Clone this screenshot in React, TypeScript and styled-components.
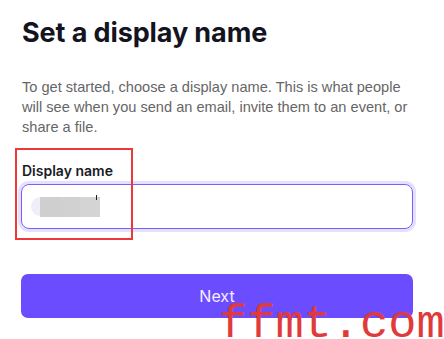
import React from "react";
import styled, { createGlobalStyle } from "styled-components";

const Global = createGlobalStyle`
  html, body { margin: 0; padding: 0; background: #ffffff; }
  body { font-family: Inter, "Noto Sans", sans-serif; }
`;

const Page = styled.div`
  position: relative;
  width: 444px;
  height: 339px;
  overflow: hidden;
  box-sizing: border-box;
  padding: 16px 31px 0 21px;
  display: flex;
  flex-direction: column;
`;

const Title = styled.h1`
  margin: 0 0 0 1px;
  font-family: Inter, sans-serif;
  font-weight: 700;
  font-size: 27px;
  line-height: 34px;
  color: #14141f;
  letter-spacing: -0.1px;
`;

const Lead = styled.p`
  margin: 27px 0 0 1px;
  font-family: "Liberation Sans", Arial, sans-serif;
  font-size: 14.6px;
  line-height: 20px;
  color: #666666;
`;

const Field = styled.div`
  margin-top: 25px;
  display: flex;
  flex-direction: column;
  gap: 4px;
`;

const Label = styled.label`
  margin-left: 1px;
  font-family: Inter, sans-serif;
  font-weight: 600;
  font-size: 14px;
  line-height: 18px;
  color: #1b1b26;
`;

const InputBox = styled.div`
  height: 43px;
  border: 1px solid #7a5cff;
  border-radius: 8px;
  box-shadow: 0 0 0 3px #e6e0ff;
  display: flex;
  align-items: center;
  padding-left: 9px;
`;

const Redacted = styled.div`
  display: flex;
  align-items: center;
  position: relative;
`;

const Cap = styled.span`
  width: 9px;
  height: 19px;
  border-radius: 10px 0 0 10px;
  background: #f0eefa;
`;

const Block = styled.span<{ $w: number; $c: string }>`
  width: ${(p) => p.$w}px;
  height: 20px;
  background: ${(p) => p.$c};
`;

const Caret = styled.span`
  position: absolute;
  left: 65px;
  top: -2px;
  width: 1px;
  height: 5px;
  background: #222;
`;

const Highlight = styled.div`
  position: absolute;
  left: 15px;
  top: 148px;
  width: 118px;
  height: 92px;
  box-sizing: border-box;
  border: 2px solid #ec3838;
  pointer-events: none;
`;

const Button = styled.button`
  margin-top: 45px;
  height: 44px;
  border: none;
  border-radius: 7px;
  background: #6c4cff;
  color: #f3efff;
  font-family: Inter, sans-serif;
  font-size: 16px;
  font-weight: 400;
  cursor: pointer;
`;

const Watermark = styled.div`
  position: absolute;
  left: 219px;
  top: 301px;
  font-family: "Liberation Mono", "Courier New", monospace;
  font-size: 47px;
  line-height: 47px;
  color: #e03a3a;
  white-space: nowrap;
  pointer-events: none;
`;

export default function App() {
  return (
    <>
      <Global />
      <Page>
        <Title>Set a display name</Title>
        <Lead>
          To get started, choose a display name. This is what people will see
          when you send an email, invite them to an event, or share a file.
        </Lead>
        <Field>
          <Label>Display name</Label>
          <InputBox>
            <Redacted>
              <Cap />
              <Block $w={20} $c="#cfcfcf" />
              <Block $w={20} $c="#d1d1d1" />
              <Block $w={20} $c="#d4d4d4" />
              <Caret />
            </Redacted>
          </InputBox>
        </Field>
        <Button>Next</Button>
        <Highlight />
        <Watermark>ffmt.com</Watermark>
      </Page>
    </>
  );
}
